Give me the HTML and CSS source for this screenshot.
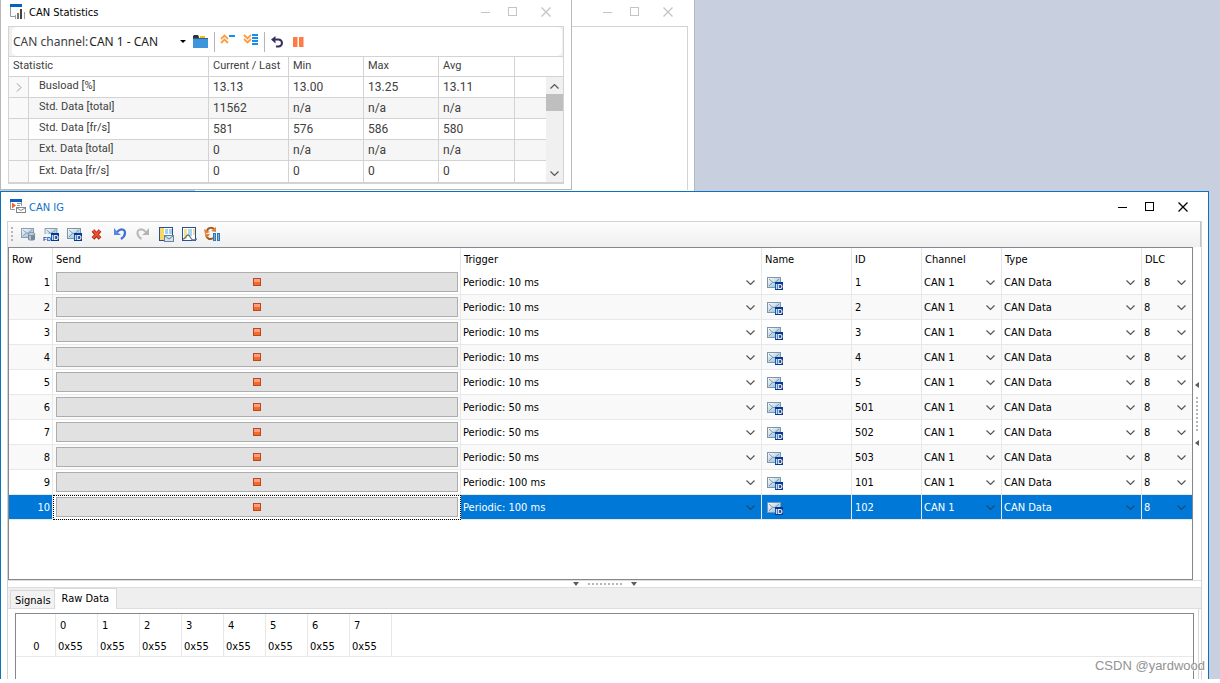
FILE: index.html
```html
<!DOCTYPE html>
<html lang="en">
<head>
<meta charset="utf-8">
<title>CAN IG</title>
<link rel="stylesheet" href="styles.css">
</head>
<body>
<svg class="defs" aria-hidden="true">
  <defs>
    <linearGradient id="env-fill" x1="0" y1="0" x2="1" y2="1">
      <stop offset="0" stop-color="#ffffff"/><stop offset="0.5" stop-color="#c3d8e8"/><stop offset="1" stop-color="#8fb4cf"/>
    </linearGradient>
    <symbol id="envelope" viewBox="0 0 14 11">
      <rect x=".5" y=".5" width="13" height="10" fill="url(#env-fill)" stroke="#7d97aa"/>
      <path d="M2 2l4 3.500h2L12 2M2 9l3.500-3.500M12 9L8.500 5.500" fill="none" stroke="#6b8294" stroke-width=".8"/>
    </symbol>
    <symbol id="badge" viewBox="0 0 8 8">
      <rect width="8" height="8" fill="#003a96"/>
      <text x="4" y="6.500" text-anchor="middle" class="badge-text">ID</text>
    </symbol>
    <symbol id="message" viewBox="0 0 16 13">
      <use href="#envelope" width="14" height="11"/>
      <use href="#badge" x="8" y="5" width="8" height="8"/>
    </symbol>
    <symbol id="chevron" viewBox="0 0 9 6">
      <path d="M.5.5l4 4 4-4" fill="none" stroke="currentColor" stroke-width="1.200"/>
    </symbol>
    <symbol id="win-min" viewBox="0 0 10 10"><path d="M0 5.500h9" stroke="currentColor"/></symbol>
    <symbol id="win-max" viewBox="0 0 10 10"><rect x=".5" y=".5" width="8" height="8" fill="none" stroke="currentColor"/></symbol>
    <symbol id="win-close" viewBox="0 0 10 10"><path d="M.5.5l9 9M9.500.5l-9 9" stroke="currentColor" stroke-width="1.300"/></symbol>
  </defs>
</svg>

<main class="desktop">
  <section class="window window-back">
    <header class="titlebar">
      <div class="win-controls">
        <button aria-label="Minimize"><svg><use href="#win-min"/></svg></button>
        <button aria-label="Maximize"><svg><use href="#win-max"/></svg></button>
        <button aria-label="Close"><svg><use href="#win-close"/></svg></button>
      </div>
    </header>
    <div class="back-body"></div>
    <div class="back-edge"></div>
  </section>

  <section class="window window-stats">
    <header class="titlebar">
      <svg class="app-icon" viewBox="0 0 16 16">
        <path d="M0 0h12v3H0z" fill="#0a5fc4"/>
        <path d="M.5 3v9.500H5" fill="none" stroke="#9a9a9a"/>
        <path d="M5 11h1v4H5zM14 8h1v7h-1z" fill="#a0a0a0"/><path d="M7 9h2v6H7z" fill="#777"/><path d="M10 5h2v10h-2z" fill="#444"/>
      </svg>
      <h1>CAN Statistics</h1>
      <div class="win-controls">
        <button aria-label="Minimize"><svg><use href="#win-min"/></svg></button>
        <button aria-label="Maximize"><svg><use href="#win-max"/></svg></button>
        <button aria-label="Close"><svg><use href="#win-close"/></svg></button>
      </div>
    </header>
    <div class="stats-frame">
      <div class="stats-toolbar">
        <label for="channel">CAN channel:</label>
        <span class="combo">
          <select id="channel"><option>CAN 1 - CAN</option></select>
          <svg class="drop" viewBox="0 0 6 3"><path d="M0 0h6L3 3z"/></svg>
        </span>
        <button class="t-folder" aria-label="Select channels"><svg width="15" height="13" viewBox="0 0 15 13"><path d="M0 1l1-1h4l1 2v2H0z" fill="#333"/><path d="M7 1h5v3H7z" fill="#f5b81e"/><path d="M0 3h15v10H0z" fill="#3d96dc"/><path d="M0 3h15v1H0z" fill="#2b5f8e"/></svg></button>
        <span class="divider"></span>
        <button class="t-collapse" aria-label="Collapse all"><svg width="16" height="12" viewBox="0 0 16 12"><path d="M1 5l3.500-3.500L8 5M1 9l3.500-3.500L8 9" fill="none" stroke="#ff9c40" stroke-width="1.800"/><path d="M9 1h6v2H9z" fill="#1590ee"/></svg></button>
        <button class="t-expand" aria-label="Expand all"><svg width="16" height="12" viewBox="0 0 16 12"><path d="M1 1l3.500 3.500L8 1M1 5l3.500 3.500L8 5" fill="none" stroke="#ff9c40" stroke-width="1.800"/><path d="M9 0h6v2H9zM9 3h6v2H9zM9 6h6v2H9zM9 9h6v2H9z" fill="#1590ee"/></svg></button>
        <span class="divider"></span>
        <button class="t-reset" aria-label="Reset"><svg width="12" height="12" viewBox="0 0 12 12"><path d="M2 3.500h5.500a3 3 0 010 7H5" fill="none" stroke="#35305e" stroke-width="2"/><path d="M4.500 0v7.500L0 3.500z" fill="#35305e"/></svg></button>
        <button class="t-pause" aria-label="Pause"><svg width="11" height="10" viewBox="0 0 11 10"><path d="M0 0h4.500v10H0zM6 0h4.500v10H6z" fill="#ff7a45"/></svg></button>
      </div>
      <div class="stats-view">
        <table class="stats-table">
          <colgroup><col class="s-mark"><col class="s-name"><col class="s-cur"><col class="s-val"><col class="s-val"><col class="s-avg"><col></colgroup>
          <thead><tr><th colspan="2">Statistic</th><th>Current / Last</th><th>Min</th><th>Max</th><th>Avg</th><th></th></tr></thead>
          <tbody>
            <tr><td class="marker"><svg viewBox="0 0 6 9"><path d="M1 .5l4 4-4 4" fill="none" stroke="#999"/></svg></td><td>Busload [%]</td><td>13.13</td><td>13.00</td><td>13.25</td><td>13.11</td><td></td></tr>
            <tr><td></td><td>Std. Data [total]</td><td>11562</td><td>n/a</td><td>n/a</td><td>n/a</td><td></td></tr>
            <tr><td></td><td>Std. Data [fr/s]</td><td>581</td><td>576</td><td>586</td><td>580</td><td></td></tr>
            <tr><td></td><td>Ext. Data [total]</td><td>0</td><td>n/a</td><td>n/a</td><td>n/a</td><td></td></tr>
            <tr><td></td><td>Ext. Data [fr/s]</td><td>0</td><td>0</td><td>0</td><td>0</td><td></td></tr>
          </tbody>
        </table>
        <div class="scrollbar">
          <button aria-label="Scroll up"><svg class="flip"><use href="#chevron"/></svg></button>
          <div class="thumb"></div>
          <button aria-label="Scroll down"><svg><use href="#chevron"/></svg></button>
        </div>
      </div>
    </div>
  </section>

  <section class="window window-ig">
    <header class="titlebar">
      <svg class="app-icon" viewBox="0 0 16 16">
        <path d="M0 0h12v3H0z" fill="#0a5fc4"/>
        <path d="M.5 3v7.500H5M11.500 3v4" fill="none" stroke="#999"/>
        <path d="M2 3.500l4 3-4 3z" fill="#f0623a"/><path d="M7 4.500h4M7 6.500h3" stroke="#999"/>
        <rect x="6.500" y="8.500" width="9" height="5" fill="#fff" stroke="#858585"/><path d="M7 9l4 2.500 4-2.500" fill="none" stroke="#858585"/>
      </svg>
      <h1>CAN IG</h1>
      <div class="win-controls">
        <button aria-label="Minimize"><svg><use href="#win-min"/></svg></button>
        <button aria-label="Maximize"><svg><use href="#win-max"/></svg></button>
        <button aria-label="Close"><svg><use href="#win-close"/></svg></button>
      </div>
    </header>
    <div class="ig-frame">
      <div class="ig-toolbar">
        <span class="grip"></span>
        <button aria-label="New from database"><svg viewBox="0 0 16 16"><use href="#envelope" x="1" y="2" width="13" height="10"/><path d="M8 8v5c0 2 7 2 7 0V8z" fill="#75869d"/><path d="M9 9v4c1 1 2 1 2 1V9z" fill="#b5c1d0"/><ellipse cx="11.500" cy="8" rx="3.500" ry="1.500" fill="#c3cedb" stroke="#6f7f95" stroke-width=".7"/></svg></button>
        <button aria-label="New CAN FD message"><svg viewBox="0 0 16 16"><use href="#envelope" x="1" y="2" width="14" height="10"/><path d="M0 8h8v7H0z" fill="#f5f5f5"/><text x="0" y="15" class="fd-text">FD</text><use href="#badge" x="8" y="7" width="8" height="8"/></svg></button>
        <button aria-label="New CAN message"><svg viewBox="0 0 16 16"><use href="#envelope" x="1" y="2" width="14" height="11"/><use href="#badge" x="8" y="7" width="8" height="8"/></svg></button>
        <button aria-label="Delete"><svg viewBox="0 0 16 16"><path d="M4 4.500l7 8M11 4.500l-7 8" stroke="#a3200f" stroke-width="3.600"/><path d="M4.200 4.500l6.600 7.500M10.800 4.500l-6.600 7.500" stroke="#f1502f" stroke-width="1.900"/></svg></button>
        <button aria-label="Undo"><svg viewBox="0 0 16 16"><path d="M5 6c4-4 8-3 8 1 0 3-1 4-4 6" fill="none" stroke="#3f6fd8" stroke-width="2.200"/><path d="M2 2v7h7L6.500 7 5 5.500z" fill="#5585e6"/></svg></button>
        <button aria-label="Redo"><svg viewBox="0 0 16 16"><path d="M11 6C7 2 2.500 3 2.500 7c0 3 1 4 4 6" fill="none" stroke="#bcbcbc" stroke-width="2.200"/><path d="M14 2v7H7l2.500-2L11 5.500z" fill="#b3b3b3"/></svg></button>
        <button aria-label="Columns"><svg viewBox="0 0 16 16"><rect x="1.500" y="1.500" width="13" height="13" fill="#fff" stroke="#2b4f9c"/><path d="M2 2h4v12H2z" fill="#f6d869"/><path d="M7 3h3v5H7zM11 3h3v5h-3z" fill="#9fd3ee"/><rect x="6.500" y="9.500" width="9" height="6" fill="#d3e2ee" stroke="#68849b"/><path d="M7 10l4 3 4-3" fill="none" stroke="#68849b"/></svg></button>
        <button aria-label="Waveform"><svg viewBox="0 0 16 16"><rect x="1.500" y="1.500" width="13" height="13" fill="#fff" stroke="#2b4f9c"/><path d="M3 3h3v10H3zM12 3h2v6h-2z" fill="#f6e28a"/><path d="M7 3h4v7H7z" fill="#a8d8f0"/><path d="M2 13c3 0 3-4 5-4s3 5 5 5 3-1 4-1" fill="none" stroke="#5f788c" stroke-width="1.300"/></svg></button>
        <button aria-label="Pause update"><svg viewBox="0 0 16 16"><path d="M3 5c1-4 6-4 8-1M2 9c1 4 4 5 7 3" fill="none" stroke="#a5551b" stroke-width="2"/><path d="M0 3l1 5 5-2zM12 1v5l-5-1zM1 8h5l-3 4z" fill="#e0822f"/><path d="M9 7h3v8H9zM13 7h3v8h-3z" fill="#2f78b5"/><path d="M10 8h1v6h-1zM14 8h1v6h-1z" fill="#71b4e2"/></svg></button>
      </div>
      <div class="ig-main">
        <div class="grid-box">
          <table class="ig-table">
            <colgroup><col class="c-row"><col><col class="c-trigger"><col class="c-name"><col class="c-id"><col class="c-channel"><col class="c-type"><col class="c-dlc"></colgroup>
            <thead><tr><th>Row</th><th>Send</th><th>Trigger</th><th>Name</th><th>ID</th><th>Channel</th><th>Type</th><th>DLC</th></tr></thead>
            <tbody id="messages"></tbody>
          </table>
        </div>
        <div class="splitter splitter-v"><i></i><b></b><i></i></div>
      </div>
      <div class="splitter splitter-h"><i></i><b></b><i></i></div>
      <div class="tabs">
        <button class="tab">Signals</button>
        <button class="tab tab-active">Raw Data</button>
      </div>
      <div class="tab-page">
        <div class="raw-box">
          <table class="raw-table">
            <thead><tr><td></td><th>0</th><th>1</th><th>2</th><th>3</th><th>4</th><th>5</th><th>6</th><th>7</th><td></td></tr></thead>
            <tbody><tr><th>0</th><td>0x55</td><td>0x55</td><td>0x55</td><td>0x55</td><td>0x55</td><td>0x55</td><td>0x55</td><td>0x55</td><td></td></tr></tbody>
          </table>
        </div>
      </div>
    </div>
  </section>
  <span class="watermark">CSDN @yardwood</span>
</main>
<script src="messages.js"></script>
</body>
</html>
```
FILE: messages.js
```js
const messages = [
  [10, "1"], [10, "2"], [10, "3"], [10, "4"], [10, "5"],
  [50, "501"], [50, "502"], [50, "503"], [100, "101"], [100, "102"]
];
const dropdown = (label, value) =>
  `<span class="pick"><select aria-label="${label}"><option>${value}</option></select><svg><use href="#chevron"/></svg></span>`;

document.getElementById("messages").innerHTML = messages.map(([cycle, id], i) => `
  <tr class="${i === messages.length - 1 ? "selected" : ""}">
    <td class="num">${i + 1}</td>
    <td class="send"><button aria-label="Stop row ${i + 1}"><span class="stop"></span></button></td>
    <td>${dropdown("Trigger", `Periodic: ${cycle} ms`)}</td>
    <td class="msg"><svg><use href="#message"/></svg></td>
    <td class="id">${id}</td>
    <td>${dropdown("Channel", "CAN 1")}</td>
    <td>${dropdown("Type", "CAN Data")}</td>
    <td>${dropdown("DLC", "8")}</td>
  </tr>`).join("");
```
FILE: styles.css
```css
* { box-sizing: border-box; }
body {
  margin: 0;
  background: #fff;
  color: #000;
  font: 11px/14px "DejaVu Sans Condensed", "Noto Sans", sans-serif;
}
button, select { font: inherit; color: inherit; border: 0; padding: 0; margin: 0; background: none; border-radius: 0; }
select { appearance: none; outline: 0; }
table { border-collapse: separate; border-spacing: 0; table-layout: fixed; }
th { font-weight: 400; text-align: left; }
th, td { padding: 0; }
h1 { margin: 0; font: inherit; }
svg { display: block; }
.defs { position: absolute; width: 0; height: 0; }
.badge-text { font: bold 7px "Liberation Sans", sans-serif; fill: #fff; }
.fd-text { font: bold 6px "Liberation Sans", sans-serif; fill: #0a4fb0; }

.desktop { position: relative; height: calc(100vh - 4px); overflow: hidden; background: #c8d0e0; }
.window { position: absolute; background: #fff; display: flex; flex-direction: column; }
.titlebar { display: flex; align-items: center; flex: none; }
.titlebar h1 { padding-top: 2px; }
.app-icon { width: 16px; height: 16px; margin-right: 3px; }
.win-controls { display: flex; margin-left: auto; }
.win-controls button { width: 30px; height: 24px; display: flex; align-items: center; justify-content: center; }
.win-controls button:first-child { width: 24px; }
.win-controls button:last-child { width: 36px; }
.win-controls svg { width: 10px; height: 10px; }

.window-back { left: 0; top: 0; width: 695px; height: 191px; border-right: 1px solid #b4b8c0; }
.window-back .titlebar { height: 26px; padding: 0 8px 2px 0; color: #c4c4c4; }
.back-body { flex: 1; margin-right: 6px; border-top: 1px solid #d3d3d3; border-right: 1px solid #d3d3d3; }
.back-edge { width: 195px; height: 1px; background: #c6c8ce; }

.window-stats {
  left: 0; top: 0; width: 572px; height: 190px; padding: 0 7px 7px;
  border: solid #b8b8b8; border-width: 0 1px 1px;
}
.window-stats .titlebar { height: 26px; padding: 0 0 2px 2px; }
.window-stats .win-controls { color: #c4c4c4; }
.stats-frame {
  flex: 1; display: flex; flex-direction: column; color: #404040;
  border: 1px solid #d3d3d3; border-width: 1px 1px 2px; background: #f0f0f0;
  font: 12px/14px Roboto, sans-serif;
}
.stats-toolbar {
  height: 29px; margin: 0 1px 0 3px; padding-left: 1px; display: flex; align-items: center;
  background: #fff; border-radius: 5px; font: 12px/16px "Noto Sans", sans-serif;
}
.combo { display: flex; align-items: center; width: 97px; margin-left: 1px; }
.combo select { flex: 1; min-width: 0; color: #222; }
.drop { width: 6px; height: 3px; fill: #000; }
.t-folder { margin: 0 6px 0 7px; }
.divider { width: 1px; height: 20px; background: #b5b5b5; }
.t-collapse { margin: 0 7px 4px 5px; }
.t-expand { margin: 0 5px 4px 0; }
.t-reset { margin: 0 10px 0 6px; }
.stats-view { display: flex; flex: 1; position: relative; border-top: 1px solid #d3d3d3; background: #fff; }
.stats-table { width: 100%; }
.stats-table th, .stats-table td { height: 21px; padding: 0 0 1px 4px; border: solid #d3d3d3; border-width: 0 1px 1px 0; white-space: nowrap; }
.stats-table th { height: 20px; font-size: 11px; }
.stats-table tr > :last-child { border-right: 0; }
.stats-table tbody tr:nth-child(even) { background: #f6f6f6; }
.stats-table td:nth-child(2) { padding: 0 0 2px 10px; font-size: 11px; }
.stats-table tbody tr:last-child td { border-bottom: 0; }
.stats-table td:first-child { background: #f9f9f9; }
.marker svg { width: 6px; height: 9px; margin: 2px 0 0 3px; }
.s-mark { width: 20px; }
.s-name { width: 180px; }
.s-cur { width: 80px; }
.s-val { width: 75px; }
.s-avg { width: 76px; }
.scrollbar { position: absolute; right: 0; top: 20px; bottom: 0; width: 17px; background: #f0f0f0; display: flex; flex-direction: column; }
.scrollbar button { height: 17px; display: flex; align-items: center; justify-content: center; color: #555; }
.scrollbar svg { width: 9px; height: 6px; }
.scrollbar .flip { transform: rotate(180deg); }
.thumb { height: 17px; margin-bottom: auto; background: #bfbfbf; }

.window-ig { left: 0; right: 11px; top: 191px; bottom: -8px; border: 1px solid #0b73bd; padding: 0 6px; }
.window-ig .titlebar { height: 29px; padding: 0 1px 0 3px; }
.window-ig h1 { color: #0b73c8; }
.ig-frame { flex: 1; display: flex; flex-direction: column; border: 1px solid #d3d3d3; min-height: 0; }
.ig-toolbar {
  height: 25px; flex: none; display: flex; align-items: center; gap: 7px; padding: 0 0 2px 3px;
  background: linear-gradient(#fdfdfd, #efefef); border-right: 1px solid #c2c2c2;
}
.ig-toolbar svg { width: 16px; height: 16px; }
.grip { width: 2px; height: 14px; background: repeating-linear-gradient(#b5b5b5 0 2px, transparent 2px 4px); }
.ig-main { display: flex; flex: none; border-bottom: 1px solid #dedede; }
.grid-box { flex: 1; height: 333px; border: 1px solid #828790; }
.ig-table { width: 100%; }
.ig-table th { height: 22px; padding: 2px 0 0 3px; border-right: 1px solid #e6e6e6; }
.ig-table td { height: 25px; border: solid #e8e8e8; border-width: 0 1px 1px 0; }
.ig-table tr > :last-child { border-right: 0; }
.ig-table tbody tr:nth-child(even) { background: #f9f9f9; }
.c-row { width: 44px; }
.c-trigger { width: 301px; }
.c-name { width: 90px; }
.c-id { width: 70px; }
.c-channel { width: 80px; }
.c-type { width: 140px; }
.c-dlc { width: 50px; }
.ig-table .num { text-align: right; padding: 2px 2px 0 0; }
.ig-table .id { padding: 2px 0 0 3px; }
.ig-table .send { padding: 0 2px 0 3px; }
.send button { width: 100%; height: 20px; background: #e1e1e1; border: 1px solid #adadad; display: flex; align-items: center; justify-content: center; }
.stop { width: 8px; height: 8px; border: 1px solid #b5482a; background: linear-gradient(#ff9f80 50%, #f96a20 50%); }
.pick { display: grid; align-items: center; padding: 2px 6px 0 2px; }
.pick select, .pick svg { grid-area: 1 / 1; }
.pick select { width: 100%; }
.pick svg { width: 9px; height: 6px; justify-self: end; color: #555; pointer-events: none; }
.msg svg { width: 16px; height: 13px; margin: 2px 0 0 5px; }
.ig-table tbody tr.selected { background: #0078d7; color: #fff; }
.selected .pick svg { color: #1c4a75; }
.selected .send { background: #fff; outline: 1px dotted #000; outline-offset: -1px; }
.splitter { display: flex; align-items: center; justify-content: center; background: #fff; }
.splitter i { border: 3px solid transparent; }
.splitter-v { width: 8px; flex-direction: column; gap: 9px; }
.splitter-v i { border-right: 4px solid #5c5c5c; border-left: 0; }
.splitter-v b { width: 2px; height: 34px; background: repeating-linear-gradient(#b5b5b5 0 2px, transparent 2px 4px); }
.splitter-h { height: 6px; flex: none; gap: 9px; }
.splitter-h i { border-top: 4px solid #5c5c5c; border-bottom: 0; }
.splitter-h b { width: 34px; height: 2px; background: repeating-linear-gradient(90deg, #b5b5b5 0 2px, transparent 2px 4px); }
.tabs { height: 22px; flex: none; display: flex; align-items: flex-end; padding-left: 2px; background: #efefef; border: solid #dedede; border-width: 1px 0; }
.tab { height: 18px; padding: 2px 3px 0 4px; border: solid #d9d9d9; border-width: 1px 0 0 1px; background: #f2f2f2; }
.tab-active { height: 21px; padding: 0 7px; margin-bottom: -1px; border-width: 1px 1px 0; background: #fff; }
.tab-page { flex: 1; padding: 4px 3px 0 7px; margin-right: 2px; border-right: 1px solid #d9d9d9; }
.raw-box { height: 100%; margin-right: 1px; border: 1px solid #828790; border-bottom: 0; }
.raw-table { width: 100%; border-bottom: 1px solid #e8e8e8; }
.raw-table th, .raw-table td { width: 42px; height: 22px; padding: 2px 0 0 2px; border-right: 1px solid #e8e8e8; }
.raw-table thead th { padding-left: 4px; }
.raw-table tbody > tr > * { height: 20px; }
.raw-table tr > :first-child { width: 40px; }
.raw-table tbody th { text-align: center; }
.raw-table tr > :last-child { width: auto; border-right: 0; }
.watermark { position: absolute; right: 15px; bottom: 4px; font: 13px/18px "Liberation Sans", sans-serif; color: #929292; text-shadow: 1px 1px 0 #fff; }
```
